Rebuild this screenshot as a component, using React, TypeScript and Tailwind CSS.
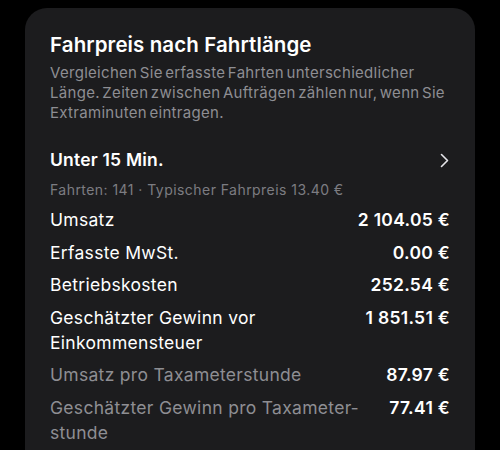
const rows = [
  { label: "Umsatz", value: "2 104.05 €", muted: false },
  { label: "Erfasste MwSt.", value: "0.00 €", muted: false },
  { label: "Betriebskosten", value: "252.54 €", muted: false },
  { label: "Geschätzter Gewinn vor Einkommensteuer", value: "1 851.51 €", muted: false },
  { label: "Umsatz pro Taxameterstunde", value: "87.97 €", muted: true },
  { label: "Geschätzter Gewinn pro Taxameter\u00ADstunde", value: "77.41 €", muted: true },
];

export default function App() {
  return (
    <div
      className="w-[500px] h-[450px] overflow-hidden bg-black pt-2 px-[25px]"
      style={{ fontFamily: "Inter, 'Noto Sans', sans-serif" }}
    >
      <div className="bg-[#1c1c1e] rounded-[22px] pt-6 px-[25px] pb-8 h-[500px]">
        <h2 className="text-white text-[20.5px] leading-[26px] font-semibold tracking-[0.1px]">
          Fahrpreis nach Fahrtlänge
        </h2>
        <p className="mt-[5px] text-[#8e8e93] text-[15px] leading-[20px] tracking-[0.3px] [word-spacing:-2px] whitespace-nowrap">
          Vergleichen Sie erfasste Fahrten unterschiedlicher
          <br />
          Länge. Zeiten zwischen Aufträgen zählen nur, wenn Sie
          <br />
          Extraminuten eintragen.
        </p>

        <div className="mt-[25px] flex items-center justify-between h-[24px]">
          <span className="text-white text-[17.5px] font-semibold tracking-[0.2px]">Unter 15 Min.</span>
          <svg width="9" height="15" viewBox="0 0 9 15" className="mr-[1px]">
            <path d="M1.5 1.5 L7.5 7.5 L1.5 13.5" fill="none" stroke="#e5e5ea" strokeWidth="1.6" strokeLinecap="round" strokeLinejoin="round" />
          </svg>
        </div>
        <p className="mt-[9px] text-[#7c7c82] text-[14px] leading-[18px] tracking-[0.45px]">
          Fahrten: 141 · Typischer Fahrpreis 13.40 €
        </p>

        <div className="mt-[8px] flex flex-col gap-[7.5px]">
          {rows.map((row, i) => (
            <div key={i} className="flex justify-between items-start text-[17.5px] leading-[25px] tracking-[0.3px]">
              <span
                className={`w-[310px] hyphens-manual ${row.muted ? "text-[#8e8e93]" : "text-white"}`}
              >
                {row.label}
              </span>
              <span className="text-white font-semibold text-right whitespace-nowrap">{row.value}</span>
            </div>
          ))}
        </div>
      </div>
    </div>
  );
}
